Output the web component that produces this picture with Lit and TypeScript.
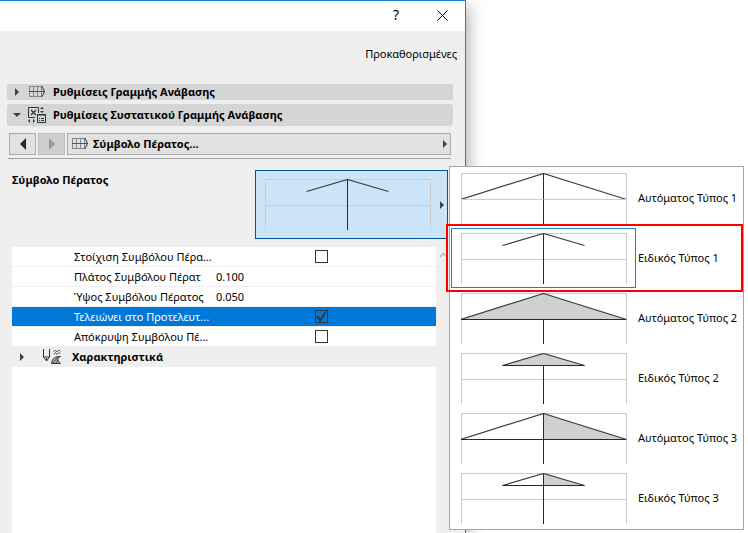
import { LitElement, html, css, svg, nothing } from "lit";
import { customElement, property } from "lit/decorators.js";
import { classMap } from "lit/directives/class-map.js";

type Fill = "none" | "full" | "right";

const gridIcon = html`<svg width="16" height="12" viewBox="0 0 16 12" fill="none" aria-hidden="true">
  <path d="M.5 .5V11M4.500 .5V11M8.500 .5V11M12.500 .5V11M0 .5H14M0 10.500H14" stroke="#7e8990" />
  <path d="M0 5.500H16" stroke="#4a565e" />
  <path d="M12.500 .5Q18 5.500 12.500 10.500" stroke="#2b363d" />
</svg>`;

const componentIcon = html`<svg width="19" height="17" viewBox="0 0 19 17" fill="none" aria-hidden="true">
  <path d="M10.500 6V.5H.5V10.500H7" stroke="#2b363d" />
  <path d="M3 3L8 8M8 3L3 8" stroke="#2b363d" stroke-width="1.2" />
  <path d="M14 0L16 2H12ZM14 6L12 4H16ZM0 14L2 12V16ZM7 14L5 12V16Z" fill="#2b363d" />
  <path d="M9.500 7.500H17.500V15.500H9.500Z" stroke="#2b363d" />
  <path d="M9 8H18M11 11.500H12M13 11.500H16M11 13.500H12M13 13.500H16" stroke="#2b363d" />
</svg>`;

const penIcon = html`<svg width="19" height="16" viewBox="0 0 19 16" fill="none" aria-hidden="true">
  <path d="M.5 0V8L3.500 12L6.500 8V0M.5 8H6.500" stroke="#2b363d" />
  <path d="M3 9H4V12H3Z" fill="#2b363d" />
  <path d="M10.500 3L12.500 1L14 3L16 1L17.500 2.500M10.500 5.500L12.500 3.500L14 5.500L16 3.500L17.500 5" stroke="#2b363d" stroke-width=".8" />
  <path d="M8.500 14.500C9 10 12 7 17.500 7.500C14 9 14 11 17.500 14.500Z" fill="#a8aeb1" stroke="#2b363d" />
  <path d="M10 14L15 8M13 14L15 11" stroke="#2b363d" stroke-width=".8" />
</svg>`;

@customElement("end-symbol")
class EndSymbol extends LitElement {
  @property({ type: Boolean }) wide = false;
  @property() fill: Fill = "none";

  static styles = css`
    :host { display: block; width: 166px; height: 51px; }
    svg { display: block; }
  `;

  render() {
    const dx = this.wide ? 83 : 41;
    const y = this.wide ? 26.5 : 12.5;
    const l = 82.5 - dx;
    const r = 82.5 + dx;
    return html`<svg width="166" height="51" viewBox="0 0 166 51" fill="none" aria-hidden="true">
      <path d="M.5 51V.5H165.5V51" stroke="#cdcdcd" />
      ${this.fill === "none"
        ? nothing
        : svg`<path fill="#d0d0d0" d="M82.5 .5L${r} ${y}H${this.fill === "full" ? l : 82.5}Z" />`}
      <path d="M${l} ${y}L82.5 .5L${r} ${y}" stroke="#323d44" stroke-width="1.2" />
      ${this.fill === "full" ? nothing : svg`<path d="M82.5 .5V51" stroke="#1f2b32" />`}
      <path d="M0 26.5H166" stroke="#cdcdcd" />
      ${this.fill === "none" ? nothing : svg`<path d="M${l} ${y}H${r}" stroke="#1f2b32" />`}
      <path d="M82.5 ${y}V51" stroke="#1f2b32" />
    </svg>`;
  }
}

@customElement("app-root")
class AppRoot extends LitElement {
  private types: { name: string; wide: boolean; fill: Fill }[] = [
    { name: "Αυτόματος Τύπος 1", wide: true, fill: "none" },
    { name: "Ειδικός Τύπος 1", wide: false, fill: "none" },
    { name: "Αυτόματος Τύπος 2", wide: true, fill: "full" },
    { name: "Ειδικός Τύπος 2", wide: false, fill: "full" },
    { name: "Αυτόματος Τύπος 3", wide: true, fill: "right" },
    { name: "Ειδικός Τύπος 3", wide: false, fill: "right" },
  ];

  private params: { label: string; value?: string; checked?: boolean; active?: boolean }[] = [
    { label: "Στοίχιση Συμβόλου Πέρα...", checked: false },
    { label: "Πλάτος Συμβόλου Πέρατ", value: "0.100" },
    { label: "Ύψος Συμβόλου Πέρατος", value: "0.050" },
    { label: "Τελειώνει στο Προτελευτ...", checked: true, active: true },
    { label: "Απόκρυψη Συμβόλου Πέ...", checked: false },
  ];

  static styles = css`
    :host {
      display: block;
      background: #fff;
      color: #000;
      font: 11px/16px "Noto Sans", "Open Sans", sans-serif;
    }
    * { box-sizing: border-box; }
    button, input { font: inherit; color: inherit; margin: 0; padding: 0; border: 0; background: none; border-radius: 0; }
    svg { display: block; flex: none; }
    .page { display: flex; min-height: 100vh; padding-right: 282px; }
    .dialog {
      flex: 1;
      min-width: 0;
      display: flex;
      flex-direction: column;
      background: #efefef;
      border-top: 1px solid #1a7fd6;
      border-right: 1px solid #1a7fd6;
      box-shadow: 2px 6px 16px rgba(0, 0, 0, 0.35);
    }
    .titlebar { display: flex; justify-content: flex-end; height: 30px; background: #fff; padding-right: 12px; gap: 24px; }
    .titlebar button { width: 22px; height: 28px; display: grid; place-items: center; font-size: 14px; }
    .defaults { align-self: flex-end; margin: 15px 8px 0 0; }
    .sections { display: flex; flex-direction: column; gap: 4px; margin: 22px 12px 7px 7px; }
    .section { display: flex; align-items: center; width: 100%; height: 22px; background: #d5d5d5; border-radius: 3px; padding-left: 6px; text-align: left; font-weight: 700; }
    .section.slim { height: 16px; }
    .arrow-slot { width: 8px; display: grid; place-items: center; }
    .icon-slot { width: 20px; display: grid; place-items: center; margin: 0 6px; }
    .tri-r { width: 0; height: 0; border: 4px solid transparent; border-left-color: #404040; border-right: 0; }
    .tri-d { width: 0; height: 0; border: 4px solid transparent; border-top-color: #404040; border-bottom: 0; }
    .nav { display: flex; gap: 2px; margin: 0 14px 0 9px; height: 22px; }
    .nav button { border: 1px solid #a9a9a9; background: #e1e1e1; display: flex; align-items: center; }
    .nav .step { width: 27px; justify-content: center; }
    .nav .step:disabled { background: #cdcdcd; border-color: #bdbdbd; }
    .step-l, .step-r { width: 0; height: 0; border: 6px solid transparent; }
    .step-l { border-right-color: #1f2b32; border-left: 0; }
    .step-r { border-left-color: #969ca0; border-right: 0; }
    .nav .tab { flex: 1; gap: 5px; padding: 0 3px 0 4px; font-weight: 700; }
    .tab-name { flex: 1; text-align: left; }
    .rule { margin: 3px 14px 11px 8px; border: 0; border-top: 1px solid #a0a0a0; }
    .symbol { display: flex; justify-content: space-between; padding: 0 17px 0 12px; }
    .symbol h2 { margin: 2px 0 0; font-size: 11px; line-height: 16px; font-weight: 700; }
    .picker { position: relative; }
    .preview { display: flex; align-items: center; gap: 9px; height: 69px; border: 1px solid #005499; background: #cce4f7; padding: 0 3px 0 9px; }
    .menu {
      position: absolute;
      z-index: 1;
      left: calc(100% + 1px);
      top: -4px;
      width: 295px;
      padding: 1px;
      background: #fff;
      border: 1px solid #a5a5a8;
    }
    .option { position: relative; display: flex; align-items: center; width: 100%; height: 60px; text-align: left; }
    .thumb { border: 1px solid transparent; padding: 4px 8px 4px 9px; height: 60px; margin-right: 2px; }
    .option.selected { z-index: 1; }
    .option.selected::after { content: ""; position: absolute; inset: -4px -1px -4px -5px; border: 2px solid #f00; }
    .option.selected .thumb { border-color: #1a7fd6; }
    .list { flex: 1; display: flex; margin: 8px 0 0 12px; }
    .rows { flex: 1; background: #fff; }
    .row { display: grid; grid-template-columns: 142px 1fr; align-items: center; height: 20px; padding: 0 10px 0 62px; border-bottom: 1px solid #efefef; }
    .row label { white-space: nowrap; }
    .row.active { background: #0078d7; color: #fff; }
    .row input[type="text"] { width: 100%; height: 16px; }
    .row input[type="checkbox"] { appearance: none; width: 13px; height: 13px; border: 1px solid #2b363d; justify-self: center; }
    .row input:checked::before {
      content: "";
      display: block;
      width: 11px;
      height: 11px;
      background: #2b363d;
      clip-path: polygon(9% 52%, 27% 45%, 43% 68%, 80% 10%, 97% 16%, 48% 98%, 36% 98%);
    }
    .group { display: flex; align-items: center; width: 100%; height: 21px; margin-top: -1px; background: #efefef; padding-left: 6px; font-weight: 700; }
    .group .icon-slot { margin: 0 10px 0 16px; }
    .scroll { width: 29px; padding: 5px 0 0 3px; }
  `;

  render() {
    return html`<div class="page">
      <main class="dialog">
        <header class="titlebar">
          <button aria-label="Βοήθεια">?</button>
          <button aria-label="Κλείσιμο">
            <svg width="11" height="11" viewBox="0 0 11 11"><path d="M.5 .5L10.5 10.5M10.5 .5L.5 10.5" stroke="#000" /></svg>
          </button>
        </header>
        <button class="defaults">Προκαθορισμένες</button>
        <div class="sections">
          <button class="section slim" aria-expanded="false">
            <span class="arrow-slot"><span class="tri-r"></span></span>
            <span class="icon-slot">${gridIcon}</span>Ρυθμίσεις Γραμμής Ανάβασης
          </button>
          <button class="section" aria-expanded="true">
            <span class="arrow-slot"><span class="tri-d"></span></span>
            <span class="icon-slot">${componentIcon}</span>Ρυθμίσεις Συστατικού Γραμμής Ανάβασης
          </button>
        </div>
        <nav class="nav">
          <button class="step" aria-label="Προηγούμενο"><span class="step-l"></span></button>
          <button class="step" aria-label="Επόμενο" disabled><span class="step-r"></span></button>
          <button class="tab">${gridIcon}<span class="tab-name">Σύμβολο Πέρατος...</span><span class="tri-r"></span></button>
        </nav>
        <hr class="rule" />
        <section class="symbol">
          <h2>Σύμβολο Πέρατος</h2>
          <div class="picker">
            <button class="preview" aria-haspopup="listbox" aria-expanded="true" aria-label="Σύμβολο Πέρατος">
              <end-symbol></end-symbol><span class="tri-r"></span>
            </button>
            <div class="menu" role="listbox" aria-label="Σύμβολο Πέρατος">
              ${this.types.map((t, i) => html`<button
                class=${classMap({ option: true, selected: i === 1 })}
                role="option"
                aria-selected=${i === 1 ? "true" : "false"}
              ><span class="thumb"><end-symbol ?wide=${t.wide} fill=${t.fill}></end-symbol></span>${t.name}</button>`)}
            </div>
          </div>
        </section>
        <section class="list">
          <div class="rows">
            ${this.params.map((p, i) => html`<div class=${classMap({ row: true, active: !!p.active })}>
              <label for="param-${i}">${p.label}</label>
              ${p.value !== undefined
                ? html`<input id="param-${i}" type="text" .value=${p.value} />`
                : html`<input id="param-${i}" type="checkbox" .checked=${!!p.checked} />`}
            </div>`)}
            <button class="group" aria-expanded="false">
              <span class="arrow-slot"><span class="tri-r"></span></span>
              <span class="icon-slot">${penIcon}</span>Χαρακτηριστικά
            </button>
          </div>
          <div class="scroll">
            <svg width="9" height="6" viewBox="0 0 9 6" fill="none"><path d="M1 5L4.500 1.500L8 5" stroke="#bdbdbd" stroke-width="1.6" /></svg>
          </div>
        </section>
      </main>
    </div>`;
  }
}
